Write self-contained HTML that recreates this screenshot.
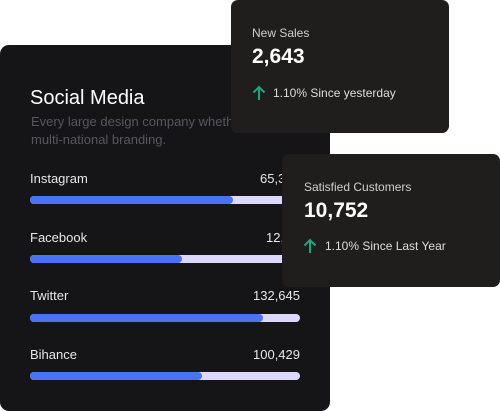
<!DOCTYPE html>
<html><head><style>
*{margin:0;padding:0;box-sizing:border-box}
body{width:500px;height:411px;background:#fff;position:relative;overflow:hidden;font-family:"Liberation Sans",sans-serif;color:#fff}
.a{position:absolute;white-space:nowrap}
.main{position:absolute;left:0;top:45px;width:330px;height:366px;background:#151518;border-radius:9px}
.card{position:absolute;background:#201e1d;border-radius:7px;width:218px;height:133px}
.bar{position:absolute;left:30px;width:270px;height:8px;border-radius:4px;background:#dcd8fb}
.bar i{display:block;height:8px;border-radius:4px;background:#4a72f5}
.lab{font-size:13px;color:#e8e8e8}
</style></head><body>
<div class="main"></div>
<div class="a" style="left:30px;top:87px;font-size:20px;">Social Media</div>
<div class="a" style="left:31px;top:113px;font-size:13px;color:#58585c;line-height:18px">Every large design company whether it’s<br>multi-national branding.</div>
<div class="a lab" style="left:30px;top:171px">Instagram</div><div class="a lab" style="left:260px;top:171px">65,3</div>
<div class="bar" style="top:196px"><i style="width:203px"></i></div>
<div class="a lab" style="left:30px;top:230px">Facebook</div><div class="a lab" style="left:266px;top:230px">12,1</div>
<div class="bar" style="top:255px"><i style="width:152px"></i></div>
<div class="a lab" style="left:30px;top:288px">Twitter</div><div class="a lab" style="right:200px;top:288px">132,645</div>
<div class="bar" style="top:314px"><i style="width:233px"></i></div>
<div class="a lab" style="left:30px;top:347px">Bihance</div><div class="a lab" style="right:200px;top:347px">100,429</div>
<div class="bar" style="top:372px"><i style="width:172px"></i></div>

<div class="card" style="left:231px;top:0"></div>
<div class="a" style="left:252px;top:26px;font-size:12px;color:#cfcfcf">New Sales</div>
<div class="a" style="left:252px;top:45px;font-size:21px;font-weight:bold">2,643</div>
<svg class="a" style="left:252px;top:85px" width="14" height="16" viewBox="0 0 14 16"><path d="M7 15V2M1.5 7.5L7 2l5.5 5.5" stroke="#1fa584" stroke-width="2" fill="none"/></svg>
<div class="a" style="left:273px;top:86px;font-size:12px;color:#ddd">1.10% Since yesterday</div>

<div class="card" style="left:282px;top:154px"></div>
<div class="a" style="left:304px;top:180px;font-size:12px;color:#cfcfcf">Satisfied Customers</div>
<div class="a" style="left:304px;top:199px;font-size:21px;font-weight:bold">10,752</div>
<svg class="a" style="left:303px;top:238px" width="14" height="16" viewBox="0 0 14 16"><path d="M7 15V2M1.5 7.5L7 2l5.5 5.5" stroke="#1fa584" stroke-width="2" fill="none"/></svg>
<div class="a" style="left:325px;top:239px;font-size:12px;color:#ddd">1.10% Since Last Year</div>
</body></html>
